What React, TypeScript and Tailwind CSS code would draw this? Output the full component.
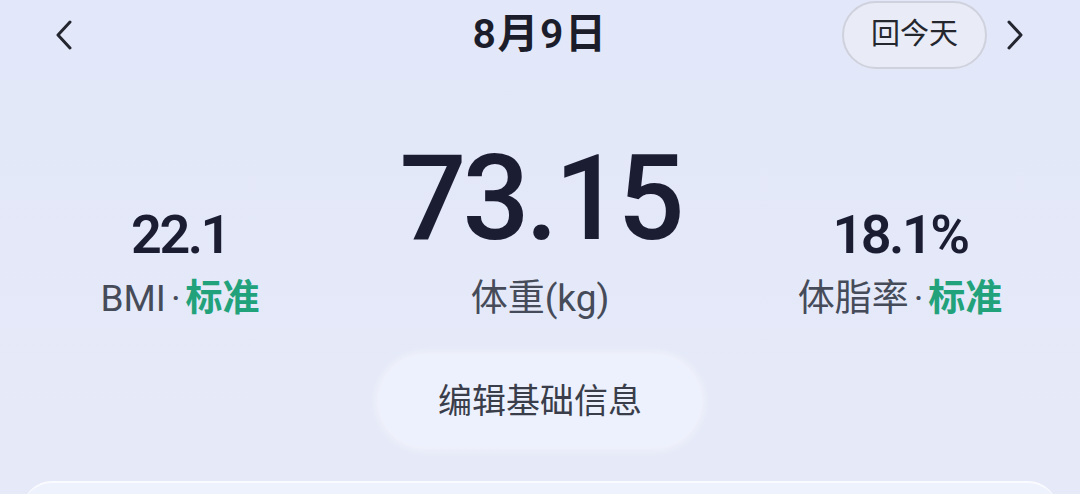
const cjk = "font-['Roboto','Noto_Sans_CJK_SC',sans-serif]"

function Chevron({ dir }: { dir: 'left' | 'right' }) {
  return (
    <svg width="18" height="30" viewBox="0 0 18 30" fill="none" className="text-[#23252f]">
      <path
        d={dir === 'left' ? 'M15 2 L3 15 L15 28' : 'M3 2 L15 15 L3 28'}
        stroke="currentColor"
        strokeWidth="3"
        strokeLinecap="round"
        strokeLinejoin="round"
      />
    </svg>
  )
}

function Label({ label, tag }: { label: string; tag?: string }) {
  return (
    <div className="mt-[18px] flex items-center text-[37px] leading-none text-[#464b59]">
      <span>{label}</span>
      {tag ? (
        <>
          <span className="mx-[5px]">·</span>
          <span className="font-semibold text-[#21a27b]">{tag}</span>
        </>
      ) : null}
    </div>
  )
}

export default function App() {
  return (
    <div className={`h-[494px] w-[1080px] overflow-hidden bg-gradient-to-b from-[#e2e7f9] to-[#e6eaf8] ${cjk}`}>
      {/* 顶部日期栏 */}
      <div className="grid h-[70px] grid-cols-[1fr_auto_1fr] items-center">
        <div className="pl-[55px]">
          <Chevron dir="left" />
        </div>
        <div className="-mt-[2px] text-[41px] font-semibold leading-none tracking-[1.5px] text-[#1b1d2b]">8月9日</div>
        <div className="flex items-center justify-end pr-[56px]">
          <div className="flex h-[68px] w-[145px] items-center justify-center rounded-full border-2 border-[#cfd2dc] bg-[#e9ecf7] text-[29px] text-[#25272f]">
            回今天
          </div>
          <div className="ml-[19px]">
            <Chevron dir="right" />
          </div>
        </div>
      </div>

      {/* 数据区 */}
      <div className="grid grid-cols-3 pt-[70px]">
        <div className="flex flex-col items-center">
          <div className="flex h-[122px] items-end">
            <div className="text-[54px] leading-none font-semibold tracking-[-2.5px] text-[#1b1d33]">22.1</div>
          </div>
          <Label label="BMI" tag="标准" />
        </div>
        <div className="flex flex-col items-center">
          <div className="flex h-[122px] items-end">
            <div className="mb-[4px] text-[118px] leading-none font-medium tracking-[-4px] text-[#1b1d33]">73.15</div>
          </div>
          <Label label="体重(kg)" />
        </div>
        <div className="flex flex-col items-center">
          <div className="flex h-[122px] items-end">
            <div className="text-[54px] leading-none font-semibold tracking-[-2.5px] text-[#1b1d33]">18.1%</div>
          </div>
          <Label label="体脂率" tag="标准" />
        </div>
      </div>

      <div className="mt-[38px] flex justify-center">
        <button className="flex h-[92px] w-[322px] items-center justify-center rounded-full bg-[#edf1fd] text-[34px] text-[#3a3e4b] shadow-[0_0_12px_rgba(255,255,255,0.8)]">
          编辑基础信息
        </button>
      </div>

      <div className="mx-[22px] mt-[34px] h-[60px] rounded-t-[30px] border-t-2 border-white/70 bg-[#eef2fd]"></div>
    </div>
  )
}
